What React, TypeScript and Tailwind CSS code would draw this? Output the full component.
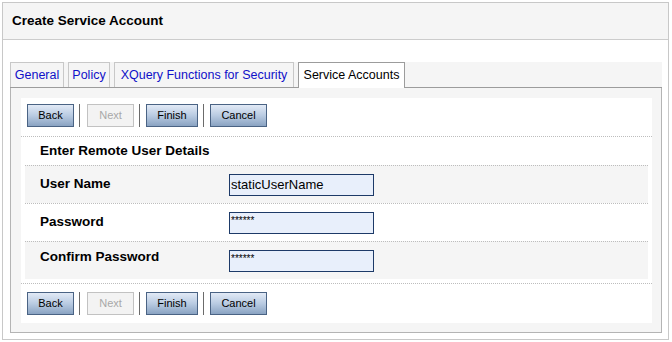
import React from "react";

const Btn = ({ label, w, disabled }: { label: string; w: string; disabled?: boolean }) => (
  <div
    className={
      disabled
        ? `${w} h-[23px] flex items-center justify-center border border-[#c2c2c2] bg-[#f3f3f3] text-[#a8a8a8] text-[11px]`
        : `${w} h-[23px] flex items-center justify-center border border-[#4a6384] bg-[linear-gradient(#e2eaf6,#b9cbe2_50%,#8aa3c2)] text-black text-[11px]`
    }
  >
    {label}
  </div>
);

const Sep = ({ wide }: { wide?: boolean }) => (
  <div className={`w-px h-[23px] bg-[#6b6b6b] ml-[5px] ${wide ? "mr-[7px]" : "mr-[6px]"}`} />
);

const ButtonRow = () => (
  <div className="flex items-center pl-[6px]">
    <Btn label="Back" w="w-[47px]" />
    <Sep wide />
    <Btn label="Next" w="w-[47px]" disabled />
    <Sep />
    <Btn label="Finish" w="w-[52px]" />
    <Sep />
    <Btn label="Cancel" w="w-[57px]" />
  </div>
);

const Row = ({ label, gray, children, labelCls }: { label: string; gray?: boolean; children: React.ReactNode; labelCls?: string }) => (
  <div className={`h-[38px] border-t border-dotted border-[#bdbdbd] flex items-center ${gray ? "bg-[#f5f5f5]" : "bg-white"}`}>
    <div className={`w-[204px] pl-[15px] font-bold text-[13.5px] text-black ${labelCls ?? ""}`}>{label}</div>
    {children}
  </div>
);

const Input = ({ children, pw }: { children: React.ReactNode; pw?: boolean }) => (
  <div
    className={`w-[145px] h-[22px] border border-[#1d3a68] bg-[#e8effb] text-black flex ${
      pw ? "items-start pt-[3px] text-[10px] leading-none pl-[1px]" : "items-center text-[13px] pl-[1px]"
    }`}
  >
    {children}
  </div>
);

const tabs = [
  { label: "General", w: "w-[54px]" },
  { label: "Policy", w: "w-[42px]" },
  { label: "XQuery Functions for Security", w: "w-[180px]" },
];

export default function App() {
  return (
    <div className="w-[672px] h-[342px] bg-white pt-[2px] pl-[2px] font-['Liberation_Sans',Arial,sans-serif]">
      <div className="w-[667px] h-[338px] border border-[#c8c8c8] flex flex-col">
        <div className="h-[37px] shrink-0 bg-[#f5f5f5] border-b border-[#cccccc] pl-[9px] flex items-center font-bold text-[13.5px] text-black">
          Create Service Account
        </div>
        <div className="pt-[22px] pl-[7px] pr-[6px]">
          <div className="h-[26px] flex bg-[#f5f5f5] border-b border-[#9c9c9c]">
            {tabs.map((t) => (
              <div
                key={t.label}
                className={`${t.w} h-[25px] mr-[4px] border-t border-l border-r border-[#c8c8c8] flex items-center justify-center text-[12.5px] text-[#1010c8]`}
              >
                {t.label}
              </div>
            ))}
            <div className="w-[107px] h-[26px] border-t border-l border-r border-[#9c9c9c] bg-white flex items-center justify-center text-[12.5px] text-black relative z-10">
              Service Accounts
            </div>
          </div>
          <div className="border-l border-r border-b border-[#b4b4b4] bg-[#f5f5f5] pt-[10px] pl-[10px] pr-[9px] pb-[9px]">
            <div className="bg-white h-[225px] flex flex-col">
              <div className="pt-[6px] h-[38px]">
                <ButtonRow />
              </div>
              <div className="border-t border-dotted border-[#bdbdbd] px-[4px] pb-[4px]">
                <div className="h-[28px] flex items-center pl-[15px] font-bold text-[13.5px] text-black">
                  Enter Remote User Details
                </div>
                <Row label="User Name" gray>
                  <Input>staticUserName</Input>
                </Row>
                <Row label="Password">
                  <Input pw>******</Input>
                </Row>
                <Row label="Confirm Password" gray labelCls="pb-[7px]">
                  <Input pw>******</Input>
                </Row>
              </div>
              <div className="border-t border-dotted border-[#bdbdbd] pt-[8px]">
                <ButtonRow />
              </div>
            </div>
          </div>
        </div>
      </div>
    </div>
  );
}
